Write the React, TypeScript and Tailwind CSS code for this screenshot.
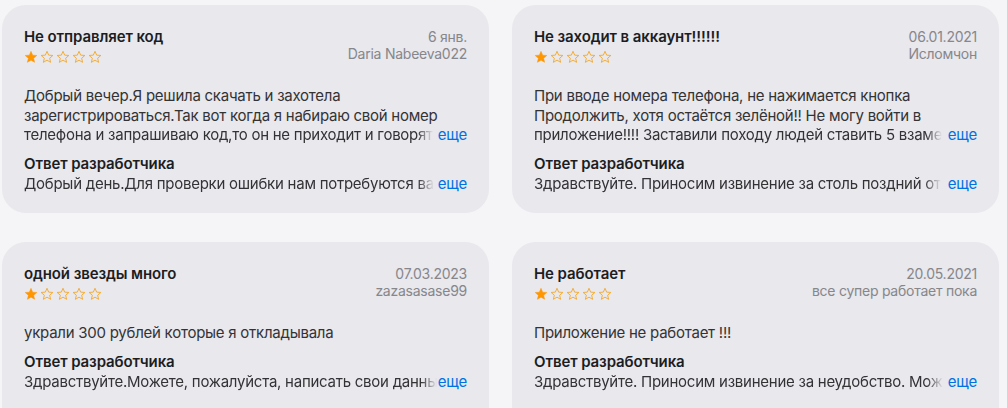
import React from "react";

type Review = {
  title: string;
  date: string;
  author: string;
  lines: string[];
  more: string | null;
  response: string;
};

const reviews: Review[] = [
  {
    title: "Не отправляет код",
    date: "6 янв.",
    author: "Daria Nabeeva022",
    lines: [
      "Добрый вечер.Я решила скачать и захотела",
      "зарегистрироваться.Так вот когда я набираю свой номер",
    ],
    more: "телефона и запрашиваю код,то он не приходит и говорят",
    response: "Добрый день.Для проверки ошибки нам потребуются ва",
  },
  {
    title: "Не заходит в аккаунт!!!!!!",
    date: "06.01.2021",
    author: "Исломчон",
    lines: [
      "При вводе номера телефона, не нажимается кнопка",
      "Продолжить, хотя остаётся зелёной!! Не могу войти в",
    ],
    more: "приложение!!!! Заставили походу людей ставить 5 взаме",
    response: "Здравствуйте. Приносим извинение за столь поздний от",
  },
  {
    title: "одной звезды много",
    date: "07.03.2023",
    author: "zazasasase99",
    lines: ["украли 300 рублей которые я откладывала"],
    more: null,
    response: "Здравствуйте.Можете, пожалуйста, написать свои данны",
  },
  {
    title: "Не работает",
    date: "20.05.2021",
    author: "все супер работает пока",
    lines: ["Приложение не работает !!!"],
    more: null,
    response: "Здравствуйте. Приносим извинение за неудобство. Мож",
  },
];

const STAR = "M12 2.2l2.85 6.6 7.15.6-5.45 4.7 1.65 7.05L12 17.4l-6.2 3.75 1.65-7.05L2 9.4l7.15-.6z";

function Stars() {
  return (
    <div className="flex h-[20px] items-center gap-[2px]">
      {[0, 1, 2, 3, 4].map((i) => (
        <svg key={i} width="14" height="14" viewBox="0 0 24 24">
          {i === 0 ? (
            <path d={STAR} fill="#ff9500" stroke="#ff9500" strokeWidth="0.8" strokeLinejoin="round" />
          ) : (
            <path d={STAR} fill="none" stroke="#f5a623" strokeWidth="1.5" strokeLinejoin="round" />
          )}
        </svg>
      ))}
    </div>
  );
}

function FadeLine({ text }: { text: string }) {
  return (
    <div className="flex">
      <span className="min-w-0 shrink overflow-hidden whitespace-nowrap [mask-image:linear-gradient(to_right,#000_calc(100%_-_16px),transparent)]">
        {text}
      </span>
      <span className="ml-auto shrink-0 pl-[1px] text-[#0071e3]">еще</span>
    </div>
  );
}

function Card({ r }: { r: Review }) {
  return (
    <div className="h-[208px] rounded-[24px] bg-[#e8e8ed] px-[22px] pt-[22px]">
      <div className="flex justify-between">
        <div>
          <div className="text-[15px] font-semibold leading-[20px] tracking-[-0.1px] text-[#1d1d1f]">
            {r.title}
          </div>
          <Stars />
        </div>
        <div className="text-right text-[14px] tracking-[-0.25px] text-[#86868b]">
          <div className="leading-[20px]">{r.date}</div>
          <div className="leading-[14px]">{r.author}</div>
        </div>
      </div>
      <div className="mt-[19px] text-[15px] leading-[19.5px] tracking-[-0.25px] text-[#333336]">
        {r.lines.map((l, i) => (
          <div key={i}>{l}</div>
        ))}
        {r.more && <FadeLine text={r.more} />}
      </div>
      <div className="mt-[9px] text-[15px] leading-[20px] tracking-[-0.25px] text-[#333336]">
        <div className="font-semibold tracking-[-0.1px] text-[#1d1d1f]">Ответ разработчика</div>
        <FadeLine text={r.response} />
      </div>
    </div>
  );
}

export default function App() {
  return (
    <div
      className="min-h-[408px] overflow-hidden bg-[#f5f5f7] pl-[2px] pt-[5px]"
      style={{ fontFamily: "Inter, 'Noto Sans', sans-serif" }}
    >
      <div className="grid grid-cols-[487px_487px] gap-x-[23px] gap-y-[29px]">
        {reviews.map((r, i) => (
          <Card key={i} r={r} />
        ))}
      </div>
    </div>
  );
}
